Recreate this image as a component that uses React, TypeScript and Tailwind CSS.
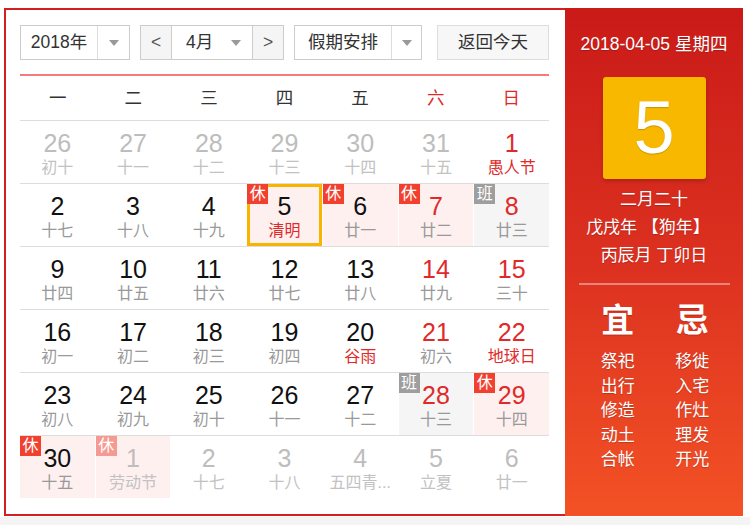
type Day = {
  d: number;
  l: string;
  cur?: boolean;
  red?: boolean;
  redL?: boolean;
  tag?: "休" | "班";
  today?: boolean;
};

const rows: Day[][] = [
  [
    { d: 26, l: "初十" },
    { d: 27, l: "十一" },
    { d: 28, l: "十二" },
    { d: 29, l: "十三" },
    { d: 30, l: "十四" },
    { d: 31, l: "十五" },
    { d: 1, l: "愚人节", cur: true, red: true, redL: true },
  ],
  [
    { d: 2, l: "十七", cur: true },
    { d: 3, l: "十八", cur: true },
    { d: 4, l: "十九", cur: true },
    { d: 5, l: "清明", cur: true, redL: true, tag: "休", today: true },
    { d: 6, l: "廿一", cur: true, tag: "休" },
    { d: 7, l: "廿二", cur: true, red: true, tag: "休" },
    { d: 8, l: "廿三", cur: true, red: true, tag: "班" },
  ],
  [
    { d: 9, l: "廿四", cur: true },
    { d: 10, l: "廿五", cur: true },
    { d: 11, l: "廿六", cur: true },
    { d: 12, l: "廿七", cur: true },
    { d: 13, l: "廿八", cur: true },
    { d: 14, l: "廿九", cur: true, red: true },
    { d: 15, l: "三十", cur: true, red: true },
  ],
  [
    { d: 16, l: "初一", cur: true },
    { d: 17, l: "初二", cur: true },
    { d: 18, l: "初三", cur: true },
    { d: 19, l: "初四", cur: true },
    { d: 20, l: "谷雨", cur: true, redL: true },
    { d: 21, l: "初六", cur: true, red: true },
    { d: 22, l: "地球日", cur: true, red: true, redL: true },
  ],
  [
    { d: 23, l: "初八", cur: true },
    { d: 24, l: "初九", cur: true },
    { d: 25, l: "初十", cur: true },
    { d: 26, l: "十一", cur: true },
    { d: 27, l: "十二", cur: true },
    { d: 28, l: "十三", cur: true, red: true, tag: "班" },
    { d: 29, l: "十四", cur: true, red: true, tag: "休" },
  ],
  [
    { d: 30, l: "十五", cur: true, tag: "休" },
    { d: 1, l: "劳动节", tag: "休" },
    { d: 2, l: "十七" },
    { d: 3, l: "十八" },
    { d: 4, l: "五四青..." },
    { d: 5, l: "立夏" },
    { d: 6, l: "廿一" },
  ],
];

const weekdays = ["一", "二", "三", "四", "五", "六", "日"];
const yi = ["祭祀", "出行", "修造", "动土", "合帐"];
const ji = ["移徙", "入宅", "作灶", "理发", "开光"];

function Caret() {
  return (
    <svg width="10" height="6" viewBox="0 0 10 6" className="fill-[#999]">
      <path d="M0 0h10L5 6z" />
    </svg>
  );
}

function Cell({ day }: { day: Day }) {
  const bg = day.tag === "休" ? "bg-[#fff0f0]" : day.tag === "班" ? "bg-[#f5f5f5]" : "bg-white";
  const numColor = !day.cur ? "text-[#bdbdbd]" : day.red ? "text-[#e02a2a]" : "text-[#111]";
  const lunColor = !day.cur ? "text-[#c2c2c2]" : day.redL ? "text-[#e02a2a]" : "text-[#999]";
  const badge =
    day.tag === "班"
      ? "bg-[#9e9e9e]"
      : day.cur
        ? "bg-[#f2402f]"
        : "bg-[#f59a92]";
  return (
    <div className={`relative flex h-[62px] flex-col items-center pt-[9px] ${bg}`}>
      {day.today && <div className="absolute inset-0 border-[3px] border-[#f8b500]" />}
      {day.tag && (
        <div className={`absolute left-0 top-0 flex h-[20px] w-[21px] items-center justify-center text-[16px] leading-none text-white ${badge}`}>
          {day.tag}
        </div>
      )}
      <div className={`text-[25px] leading-[26px] ${numColor}`}>{day.d}</div>
      <div className={`mt-[2px] whitespace-nowrap text-[16px] leading-[20px] ${lunColor}`}>{day.l}</div>
    </div>
  );
}

export default function App() {
  return (
    <div className="flex h-[525px] w-[750px] flex-col bg-white font-['Liberation_Sans','Noto_Sans_CJK_SC',sans-serif]">
      <div className="ml-[4px] mt-[8px] flex h-[508px] w-[739px]">
        {/* calendar */}
        <div className="flex w-[561px] flex-col border-2 border-r-0 border-[#d21f1f] pl-[14px] pr-[16px] pt-[15px]">
          <div className="flex h-[35px] text-[17.5px] text-[#333]">
            <div className="flex w-[110px] border border-[#ccc]">
              <div className="flex w-[76px] items-center justify-center">2018年</div>
              <div className="flex flex-1 items-center justify-center border-l border-[#ddd]">
                <Caret />
              </div>
            </div>
            <div className="ml-[10px] flex w-[144px] border border-[#ccc]">
              <div className="flex w-[30px] items-center justify-center bg-[#f5f5f5] text-[#555]">&lt;</div>
              <div className="flex flex-1 items-center justify-between border-x border-[#ccc] pl-[14px] pr-[11px]">
                <span>4月</span>
                <Caret />
              </div>
              <div className="flex w-[30px] items-center justify-center bg-[#f5f5f5] text-[#555]">&gt;</div>
            </div>
            <div className="ml-[10px] flex w-[128px] border border-[#ccc]">
              <div className="flex w-[96px] items-center justify-center">假期安排</div>
              <div className="flex flex-1 items-center justify-center border-l border-[#ddd]">
                <Caret />
              </div>
            </div>
            <div className="ml-[15px] flex w-[112px] items-center justify-center border border-[#ddd] bg-[#f7f7f7]">
              返回今天
            </div>
          </div>
          <div className="mt-[14px] h-[2px] shrink-0 bg-[#f77a7a]" />
          <div className="grid h-[45px] grid-cols-7 items-center border-b border-[#ddd] text-center text-[17.5px]">
            {weekdays.map((w, i) => (
              <div key={w} className={i >= 5 ? "text-[#e02a2a]" : "text-[#333]"}>
                {w}
              </div>
            ))}
          </div>
          {rows.map((r, ri) => (
            <div
              key={ri}
              className={`grid grid-cols-7 gap-x-px ${ri < rows.length - 1 ? "border-b border-[#ddd]" : ""}`}
            >
              {r.map((day, i) => (
                <Cell key={i} day={day} />
              ))}
            </div>
          ))}
        </div>

        {/* detail panel */}
        <div className="flex w-[178px] flex-col items-center bg-gradient-to-b from-[#ca1a18] via-[#dc3020] to-[#f35125] text-white [text-shadow:0_1px_1px_rgba(0,0,0,0.2)]">
          <div className="mt-[26px] whitespace-nowrap text-[17.5px] leading-[20px]">2018-04-05 星期四</div>
          <div className="mt-[23px] flex h-[102px] w-[103px] items-center justify-center rounded-[3px] bg-[#f8b800] text-[74px] leading-none shadow-[0_2px_4px_rgba(0,0,0,0.2)]">
            5
          </div>
          <div className="mt-[7px] whitespace-nowrap text-center text-[17px] leading-[28px]">
            <div>二月二十</div>
            <div className="-ml-[12px]">戊戌年 【狗年】</div>
            <div>丙辰月 丁卯日</div>
          </div>
          <div className="mt-[13px] h-[2px] w-[151px] bg-white/40" />
          <div className="mt-[17px] flex w-[151px] justify-around pl-[2px] text-[17px] leading-[24.5px]">
            <div className="flex flex-col items-center">
              <div className="mb-[10px] text-[33px] font-bold leading-[38px]">宜</div>
              {yi.map((t) => (
                <div key={t}>{t}</div>
              ))}
            </div>
            <div className="flex flex-col items-center">
              <div className="mb-[10px] text-[33px] font-bold leading-[38px]">忌</div>
              {ji.map((t) => (
                <div key={t}>{t}</div>
              ))}
            </div>
          </div>
        </div>
      </div>
      <div className="mt-px flex-1 bg-[#f4f4f4]" />
    </div>
  );
}
